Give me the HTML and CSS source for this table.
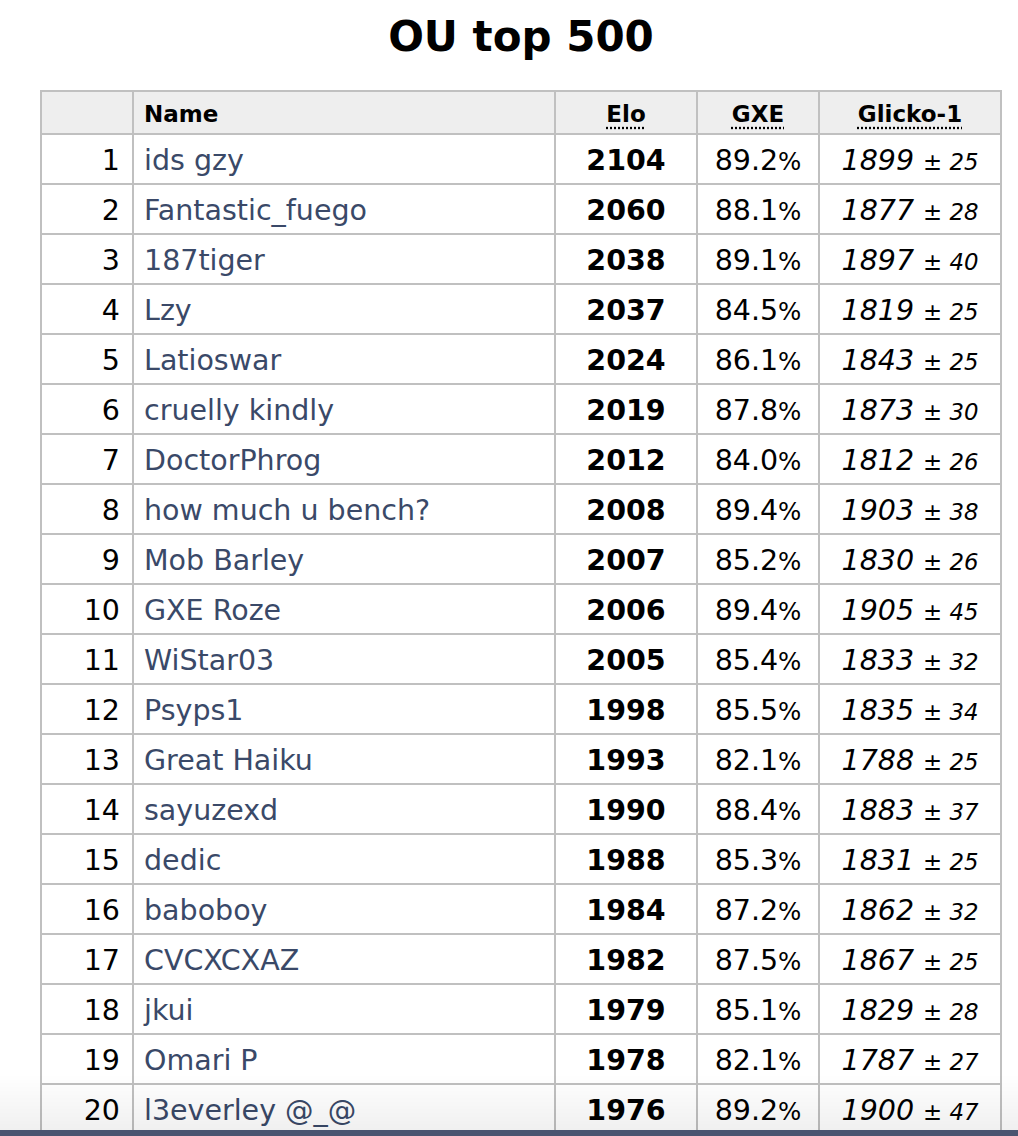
FILE: index.html
```html
<!DOCTYPE html>
<html>
<head>
<meta charset="utf-8">
<title>OU top 500</title>
<link rel="stylesheet" href="styles.css">
</head>
<body>
<div class="wrap">
  <h1 class="title">OU top 500</h1>
  <table class="ladder">
    <colgroup>
      <col class="c-rank"><col class="c-name"><col class="c-elo"><col class="c-gxe"><col class="c-glicko">
    </colgroup>
    <thead>
      <tr><th></th><th class="th-name">Name</th><th><abbr>Elo</abbr></th><th><abbr>GXE</abbr></th><th><abbr>Glicko-1</abbr></th></tr>
    </thead>
    <tbody>
      <tr><td class="rank">1</td><td class="name">ids gzy</td><td class="elo">2104</td><td class="gxe">89.2<small>%</small></td><td class="glicko"><em>1899 <small>± 25</small></em></td></tr>
      <tr><td class="rank">2</td><td class="name">Fantastic_fuego</td><td class="elo">2060</td><td class="gxe">88.1<small>%</small></td><td class="glicko"><em>1877 <small>± 28</small></em></td></tr>
      <tr><td class="rank">3</td><td class="name">187tiger</td><td class="elo">2038</td><td class="gxe">89.1<small>%</small></td><td class="glicko"><em>1897 <small>± 40</small></em></td></tr>
      <tr><td class="rank">4</td><td class="name">Lzy</td><td class="elo">2037</td><td class="gxe">84.5<small>%</small></td><td class="glicko"><em>1819 <small>± 25</small></em></td></tr>
      <tr><td class="rank">5</td><td class="name">Latioswar</td><td class="elo">2024</td><td class="gxe">86.1<small>%</small></td><td class="glicko"><em>1843 <small>± 25</small></em></td></tr>
      <tr><td class="rank">6</td><td class="name">cruelly kindly</td><td class="elo">2019</td><td class="gxe">87.8<small>%</small></td><td class="glicko"><em>1873 <small>± 30</small></em></td></tr>
      <tr><td class="rank">7</td><td class="name">DoctorPhrog</td><td class="elo">2012</td><td class="gxe">84.0<small>%</small></td><td class="glicko"><em>1812 <small>± 26</small></em></td></tr>
      <tr><td class="rank">8</td><td class="name">how much u bench?</td><td class="elo">2008</td><td class="gxe">89.4<small>%</small></td><td class="glicko"><em>1903 <small>± 38</small></em></td></tr>
      <tr><td class="rank">9</td><td class="name">Mob Barley</td><td class="elo">2007</td><td class="gxe">85.2<small>%</small></td><td class="glicko"><em>1830 <small>± 26</small></em></td></tr>
      <tr><td class="rank">10</td><td class="name">GXE Roze</td><td class="elo">2006</td><td class="gxe">89.4<small>%</small></td><td class="glicko"><em>1905 <small>± 45</small></em></td></tr>
      <tr><td class="rank">11</td><td class="name">WiStar03</td><td class="elo">2005</td><td class="gxe">85.4<small>%</small></td><td class="glicko"><em>1833 <small>± 32</small></em></td></tr>
      <tr><td class="rank">12</td><td class="name">Psyps1</td><td class="elo">1998</td><td class="gxe">85.5<small>%</small></td><td class="glicko"><em>1835 <small>± 34</small></em></td></tr>
      <tr><td class="rank">13</td><td class="name">Great Haiku</td><td class="elo">1993</td><td class="gxe">82.1<small>%</small></td><td class="glicko"><em>1788 <small>± 25</small></em></td></tr>
      <tr><td class="rank">14</td><td class="name">sayuzexd</td><td class="elo">1990</td><td class="gxe">88.4<small>%</small></td><td class="glicko"><em>1883 <small>± 37</small></em></td></tr>
      <tr><td class="rank">15</td><td class="name">dedic</td><td class="elo">1988</td><td class="gxe">85.3<small>%</small></td><td class="glicko"><em>1831 <small>± 25</small></em></td></tr>
      <tr><td class="rank">16</td><td class="name">baboboy</td><td class="elo">1984</td><td class="gxe">87.2<small>%</small></td><td class="glicko"><em>1862 <small>± 32</small></em></td></tr>
      <tr><td class="rank">17</td><td class="name">CVCXCXAZ</td><td class="elo">1982</td><td class="gxe">87.5<small>%</small></td><td class="glicko"><em>1867 <small>± 25</small></em></td></tr>
      <tr><td class="rank">18</td><td class="name">jkui</td><td class="elo">1979</td><td class="gxe">85.1<small>%</small></td><td class="glicko"><em>1829 <small>± 28</small></em></td></tr>
      <tr><td class="rank">19</td><td class="name">Omari P</td><td class="elo">1978</td><td class="gxe">82.1<small>%</small></td><td class="glicko"><em>1787 <small>± 27</small></em></td></tr>
      <tr><td class="rank">20</td><td class="name">l3everley @_@</td><td class="elo">1976</td><td class="gxe">89.2<small>%</small></td><td class="glicko"><em>1900 <small>± 47</small></em></td></tr>
    </tbody>
  </table>
</div>
<div class="bottom-fade"></div>
<div class="bottom-bar"></div>
</body>
</html>
```
FILE: styles.css
```css
html, body {
  margin: 0;
  padding: 0;
  background: #ffffff;
  overflow: hidden;
}
body {
  font-family: "DejaVu Sans", Verdana, sans-serif;
  color: #000;
}
.wrap {
  width: 962px;
  margin-left: 40px;
  padding-top: 12px;
}
.title {
  margin: 0 0 29px 0;
  font-size: 42px;
  line-height: 49px;
  font-weight: bold;
  text-align: center;
}
.ladder {
  width: 962px;
  table-layout: fixed;
  border-collapse: collapse;
  font-size: 28.5px;
}
.c-rank { width: 92px; }
.c-name { width: 422px; }
.c-elo { width: 142px; }
.c-gxe { width: 122px; }
.c-glicko { width: 182px; }
.ladder th, .ladder td {
  border: 2px solid #c0c0c0;
  padding: 0;
  white-space: nowrap;
  overflow: hidden;
}
.ladder th {
  background: #eeeeee;
  font-size: 23px;
  font-weight: bold;
  padding-top: 3px;
  height: 38px;
  line-height: 38px;
  text-align: center;
}
.ladder th.th-name {
  text-align: left;
  padding-left: 10px;
}
.ladder abbr {
  text-decoration: underline dotted;
  text-underline-offset: 5px;
}
.ladder td {
  padding-top: 4px;
  height: 44px;
  line-height: 44px;
}
.ladder small {
  line-height: 1;
}
.rank {
  text-align: right;
  padding-right: 12px !important;
}
.name {
  padding-left: 10px !important;
  color: #3a4968;
}
.elo {
  text-align: center;
  font-weight: bold;
}
.gxe {
  text-align: center;
}
.gxe small {
  font-size: 0.86em;
}
.glicko {
  text-align: center;
}
.glicko small {
  font-size: 0.8em;
}
.bottom-fade {
  position: fixed;
  left: 0;
  right: 0;
  bottom: 6px;
  height: 56px;
  background: linear-gradient(to bottom, rgba(0,0,0,0), rgba(0,0,0,0.06));
  pointer-events: none;
}
.bottom-bar {
  position: fixed;
  left: 0;
  right: 0;
  bottom: 0;
  height: 6px;
  background: #4a5470;
}
```
